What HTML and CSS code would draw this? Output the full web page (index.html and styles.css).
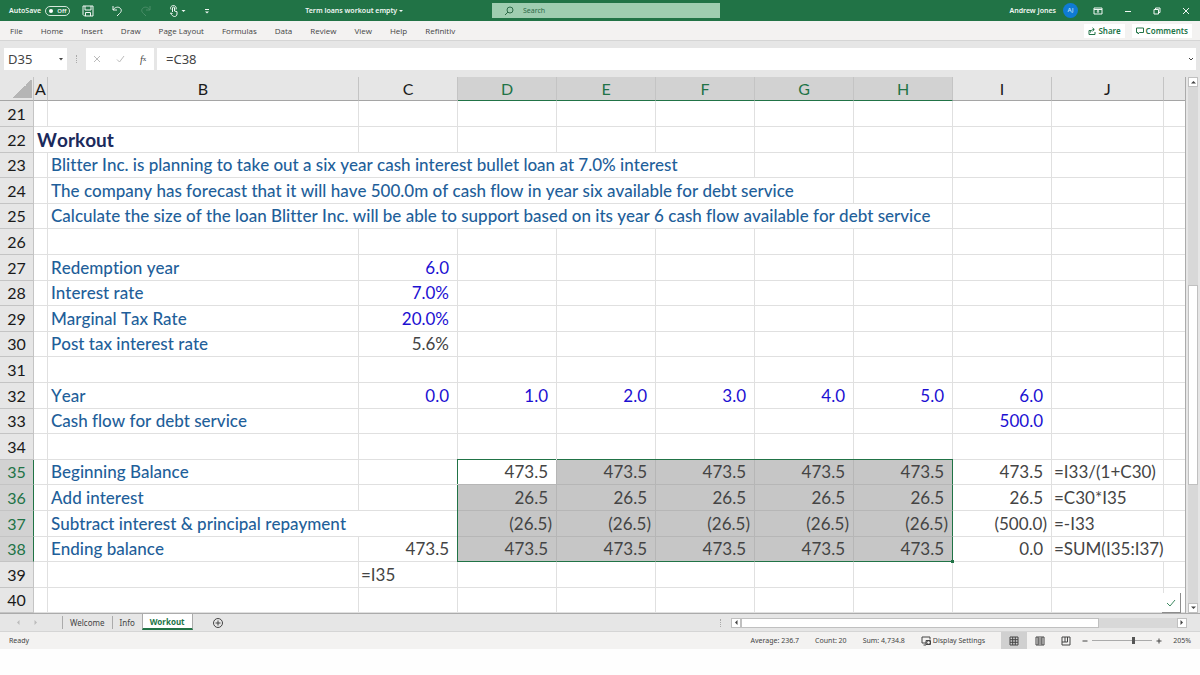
FILE: index.html
```
<!DOCTYPE html>
<html lang="en">
<head>
  <meta charset="UTF-8">
  <meta name="viewport" content="width=device-width, initial-scale=1.0">
  <title>Term loans workout empty</title>
  <link rel="stylesheet" href="styles.css">
</head>
<body>
  <header class="titlebar">
    <div class="title-left">
      <label class="autosave">AutoSave <input type="checkbox"><span class="switch">Off</span></label>
      <div class="quick">
        <button aria-label="Save"><svg width="12" height="12" viewBox="0 0 12 12"><path d="M1 1h10v10H2.500L1 9.500zM3 1v4h6V1M3.500 11V7.500h5V11"/></svg></button>
        <button aria-label="Undo"><svg width="12" height="12" viewBox="0 0 12 12"><path d="M2 1v4h4M2 5c2-3 5-3.500 7-2s1.500 4-.5 5.500L6 11"/></svg></button>
        <button class="faded" aria-label="Redo"><svg width="12" height="12" viewBox="0 0 12 12"><path d="M10 1v4H6M10 5C8 2 5 1.500 3 3s-1.500 4 .5 5.500L6 11"/></svg></button>
        <button class="touch" aria-label="Touch mode"><svg width="18" height="12" viewBox="0 0 18 12"><path d="M3.500 7V3a1 1 0 0 1 2 0v3l2.500.7V9c0 1.500-1 2.500-2.500 2.500S2.500 10 1.500 8l2 .5M2 4.500C.5 2 3 .5 4.500.5S8 2 7 4.500"/><path class="solid" d="M12.500 5h4l-2 2z"/></svg></button>
        <button aria-label="Customize toolbar"><svg width="6" height="12" viewBox="0 0 6 12"><path d="M1 4.500h4"/><path class="solid" d="M1 6.500h4L3 8.500z"/></svg></button>
      </div>
      <span class="doc-name">Term loans workout empty <svg width="4" height="4" viewBox="0 0 4 4"><path class="solid" d="M0 1h4L2 3z"/></svg></span>
    </div>
    <div class="search">
      <svg width="10" height="10" viewBox="0 0 10 10"><circle cx="6" cy="4" r="3"/><path d="M4 6L1 9"/></svg>
      <input type="text" placeholder="Search" aria-label="Search">
    </div>
    <div class="title-right">
      <span>Andrew Jones</span>
      <span class="avatar">AJ</span>
      <div class="window-btns">
        <button aria-label="Ribbon display options"><svg width="10" height="8" viewBox="0 0 10 8"><path d="M1 1h8v6H1zM1 2.500h8M5 6V3.500M3.800 4.500L5 3.500l1.200 1"/></svg></button>
        <button aria-label="Minimize"><svg width="8" height="8" viewBox="0 0 8 8"><path d="M1 4.500h6"/></svg></button>
        <button aria-label="Restore"><svg width="8" height="8" viewBox="0 0 8 8"><path d="M1 2.500h4.500V7H1zM2.500 2.500V1H7v4.500H5.500"/></svg></button>
        <button aria-label="Close"><svg width="8" height="8" viewBox="0 0 8 8"><path d="M1 1l6 6M7 1L1 7"/></svg></button>
      </div>
    </div>
  </header>

  <nav class="ribbon">
    <a href="#">File</a>
    <a href="#">Home</a>
    <a href="#">Insert</a>
    <a href="#">Draw</a>
    <a href="#">Page Layout</a>
    <a href="#">Formulas</a>
    <a href="#">Data</a>
    <a href="#">Review</a>
    <a href="#">View</a>
    <a href="#">Help</a>
    <a href="#">Refinitiv</a>
    <div class="ribbon-actions">
      <button><svg width="8" height="8" viewBox="0 0 8 8"><path d="M3 3.500H1v4h6V5M2.500 5.500C2.500 3.500 4 2.500 6 2.500M4.500.8l1.800 1.700-1.800 1.700"/></svg>Share</button>
      <button><svg width="8" height="8" viewBox="0 0 8 8"><path d="M.5 1h7v4.500h-4L2 7V5.500H.5z"/></svg>Comments</button>
    </div>
  </nav>

  <div class="formula-bar">
    <div class="name-box">
      <input type="text" value="D35" aria-label="Name box">
      <button aria-label="Names"><svg width="6" height="4" viewBox="0 0 6 4"><path class="solid" d="M1 1h4L3 3.500z"/></svg></button>
    </div>
    <span class="grip"></span>
    <div class="fx-btns">
      <button aria-label="Cancel"><svg width="8" height="8" viewBox="0 0 8 8"><path d="M1 1l6 6M7 1L1 7"/></svg></button>
      <button aria-label="Enter"><svg width="9" height="8" viewBox="0 0 9 8"><path d="M1 4.500L3.500 7 8 1"/></svg></button>
      <button class="fx" aria-label="Insert function"><i>f</i><sub>x</sub></button>
    </div>
    <div class="formula">
      <input type="text" value="=C38" aria-label="Formula">
      <button aria-label="Expand"><svg width="6" height="5" viewBox="0 0 6 5"><path d="M1 1l2 2 2-2"/></svg></button>
    </div>
  </div>

  <main class="workspace">
    <div class="sheet">
      <table>
        <colgroup>
          <col class="c-num"><col class="c-a"><col class="c-b"><col class="c-val"><col class="c-val"><col class="c-val"><col class="c-val"><col class="c-val"><col class="c-val"><col class="c-val"><col class="c-j"><col>
        </colgroup>
        <thead>
          <tr><th class="corner"></th><th>A</th><th>B</th><th>C</th><th class="on">D</th><th class="on">E</th><th class="on">F</th><th class="on">G</th><th class="on">H</th><th>I</th><th>J</th><th></th></tr>
        </thead>
        <tbody>
          <tr><th>21</th><td></td><td></td><td></td><td></td><td></td><td></td><td></td><td></td><td></td><td></td><td></td></tr>
          <tr><th>22</th><td class="heading" colspan="2">Workout</td><td></td><td></td><td></td><td></td><td></td><td></td><td></td><td></td><td></td></tr>
          <tr><th>23</th><td></td><td class="label" colspan="5">Blitter Inc. is planning to take out a six year cash interest bullet loan at 7.0% interest</td><td></td><td></td><td></td><td></td><td></td></tr>
          <tr><th>24</th><td></td><td class="label" colspan="6">The company has forecast that it will have 500.0m of cash flow in year six available for debt service</td><td></td><td></td><td></td><td></td></tr>
          <tr><th>25</th><td></td><td class="label" colspan="7">Calculate the size of the loan Blitter Inc. will be able to support based on its year 6 cash flow available for debt service</td><td></td><td></td><td></td></tr>
          <tr><th>26</th><td></td><td></td><td></td><td></td><td></td><td></td><td></td><td></td><td></td><td></td><td></td></tr>
          <tr><th>27</th><td></td><td class="label">Redemption year</td><td class="num input">6.0</td><td></td><td></td><td></td><td></td><td></td><td></td><td></td><td></td></tr>
          <tr><th>28</th><td></td><td class="label">Interest rate</td><td class="num input">7.0%</td><td></td><td></td><td></td><td></td><td></td><td></td><td></td><td></td></tr>
          <tr><th>29</th><td></td><td class="label">Marginal Tax Rate</td><td class="num input">20.0%</td><td></td><td></td><td></td><td></td><td></td><td></td><td></td><td></td></tr>
          <tr><th>30</th><td></td><td class="label">Post tax interest rate</td><td class="num">5.6%</td><td></td><td></td><td></td><td></td><td></td><td></td><td></td><td></td></tr>
          <tr><th>31</th><td></td><td></td><td></td><td></td><td></td><td></td><td></td><td></td><td></td><td></td><td></td></tr>
          <tr><th>32</th><td></td><td class="label">Year</td><td class="num input">0.0</td><td class="num input">1.0</td><td class="num input">2.0</td><td class="num input">3.0</td><td class="num input">4.0</td><td class="num input">5.0</td><td class="num input">6.0</td><td></td><td></td></tr>
          <tr><th>33</th><td></td><td class="label">Cash flow for debt service</td><td></td><td></td><td></td><td></td><td></td><td></td><td class="num input">500.0</td><td></td><td></td></tr>
          <tr><th>34</th><td></td><td></td><td></td><td></td><td></td><td></td><td></td><td></td><td></td><td></td><td></td></tr>
          <tr class="range range-top"><th>35</th><td></td><td class="label">Beginning Balance</td><td></td><td class="num sel first active">473.5</td><td class="num sel">473.5</td><td class="num sel">473.5</td><td class="num sel">473.5</td><td class="num sel last">473.5</td><td class="num">473.5</td><td>=I33/(1+C30)</td><td></td></tr>
          <tr class="range"><th>36</th><td></td><td class="label">Add interest</td><td></td><td class="num sel first">26.5</td><td class="num sel">26.5</td><td class="num sel">26.5</td><td class="num sel">26.5</td><td class="num sel last">26.5</td><td class="num">26.5</td><td>=C30*I35</td><td></td></tr>
          <tr class="range"><th>37</th><td></td><td class="label" colspan="2">Subtract interest &amp; principal repayment</td><td class="num neg sel first">(26.5)</td><td class="num neg sel">(26.5)</td><td class="num neg sel">(26.5)</td><td class="num neg sel">(26.5)</td><td class="num neg sel last">(26.5)</td><td class="num neg">(500.0)</td><td>=-I33</td><td></td></tr>
          <tr class="range range-bottom"><th>38</th><td></td><td class="label">Ending balance</td><td class="num">473.5</td><td class="num sel first">473.5</td><td class="num sel">473.5</td><td class="num sel">473.5</td><td class="num sel">473.5</td><td class="num sel last">473.5<span class="fill-handle"></span></td><td class="num">0.0</td><td colspan="2">=SUM(I35:I37)</td></tr>
          <tr><th>39</th><td></td><td></td><td>=I35</td><td></td><td></td><td></td><td></td><td></td><td></td><td></td><td></td></tr>
          <tr><th>40</th><td></td><td></td><td></td><td></td><td></td><td></td><td></td><td></td><td></td><td></td><td></td></tr>
        </tbody>
      </table>
      <div class="check-badge"><svg width="10" height="8" viewBox="0 0 10 8"><path d="M1 4l3 3 5-6"/></svg></div>
    </div>
    <div class="vscroll">
      <button aria-label="Scroll up"><svg width="5" height="4" viewBox="0 0 5 4"><path class="solid" d="M0 3.500h5L2.500 1z"/></svg></button>
      <div class="vtrack"><div class="vthumb"></div></div>
      <button aria-label="Scroll down"><svg width="5" height="4" viewBox="0 0 5 4"><path class="solid" d="M0 .5h5L2.500 3z"/></svg></button>
    </div>
  </main>

  <div class="sheet-tabs">
    <div class="tab-nav">
      <button aria-label="Previous sheet"><svg width="4" height="5" viewBox="0 0 4 5"><path class="solid" d="M3.500 0v5L1 2.500z"/></svg></button>
      <button aria-label="Next sheet"><svg width="4" height="5" viewBox="0 0 4 5"><path class="solid" d="M.5 0v5L3 2.500z"/></svg></button>
    </div>
    <button class="tab">Welcome</button>
    <button class="tab">Info</button>
    <button class="tab current">Workout</button>
    <button class="add-tab" aria-label="New sheet"><svg width="12" height="12" viewBox="0 0 12 12"><circle cx="6" cy="6" r="4.500"/><path d="M6 3.500v5M3.500 6h5"/></svg></button>
    <span class="grip"></span>
    <div class="hscroll">
      <button aria-label="Scroll left"><svg width="4" height="5" viewBox="0 0 4 5"><path class="solid" d="M3.500 0v5L1 2.500z"/></svg></button>
      <div class="htrack"><div class="hthumb"></div></div>
      <button aria-label="Scroll right"><svg width="4" height="5" viewBox="0 0 4 5"><path class="solid" d="M.5 0v5L3 2.500z"/></svg></button>
    </div>
  </div>

  <footer class="status">
    <span class="ready">Ready</span>
    <span>Average: 236.7</span>
    <span>Count: 20</span>
    <span>Sum: 4,734.8</span>
    <button class="display"><svg width="10" height="10" viewBox="0 0 10 10"><path d="M5 7H1V1h8v2.500M2.500 9H5"/><circle cx="7.500" cy="6.500" r="1.800"/><path d="M5 4.500h4.500v4H5z"/></svg>Display Settings</button>
    <div class="views">
      <button class="current" aria-label="Normal view"><svg width="10" height="10" viewBox="0 0 10 10"><path d="M1 1h8v8H1zM3.700 1v8M6.300 1v8M1 3.700h8M1 6.300h8"/></svg></button>
      <button aria-label="Page layout view"><svg width="10" height="10" viewBox="0 0 10 10"><path d="M1 1h8v8H1zM3 1v8M7 1v8M3 3h4M3 5h4M3 7h4"/></svg></button>
      <button aria-label="Page break view"><svg width="10" height="10" viewBox="0 0 10 10"><path d="M1 1h8v8H1zM1 6h5.500V1M4 1v5"/></svg></button>
    </div>
    <div class="zoom">
      <button aria-label="Zoom out"><svg width="6" height="6" viewBox="0 0 6 6"><path d="M.5 3h5"/></svg></button>
      <input type="range" min="0" max="100" value="70" aria-label="Zoom">
      <button aria-label="Zoom in"><svg width="6" height="6" viewBox="0 0 6 6"><path d="M.5 3h5M3 .5v5"/></svg></button>
      <span>205%</span>
    </div>
  </footer>
</body>
</html>
```

FILE: styles.css
```
* {
  box-sizing: border-box;
}
body {
  margin: 0;
  background: #fefefe;
  color: #444;
  font-family: "Noto Sans", "Open Sans", sans-serif;
  font-size: 8px;
}
button {
  display: flex;
  align-items: center;
  justify-content: center;
  padding: 0;
  border: none;
  background: none;
  color: inherit;
  font: inherit;
}
input {
  min-width: 0;
  margin: 0;
  padding: 0;
  border: none;
  background: none;
  color: inherit;
  font: inherit;
}
svg {
  flex: none;
  fill: none;
  stroke: currentColor;
}
svg .solid {
  fill: currentColor;
  stroke: none;
}

/* title bar */
.titlebar {
  display: grid;
  grid-template-columns: 41% 19% 1fr;
  align-items: center;
  height: 21px;
  background: #217346;
  color: #f2f8f4;
  font-size: 7px;
  font-weight: 600;
}
.title-left {
  display: flex;
  align-items: center;
  padding: 0 89px 0 9px;
}
.autosave {
  display: flex;
  align-items: center;
  gap: 4px;
}
.autosave input {
  position: absolute;
  opacity: 0;
}
.switch {
  display: flex;
  align-items: center;
  gap: 4px;
  height: 10px;
  padding: 0 3px;
  border: 1px solid #d5e8dc;
  border-radius: 5px;
  font-size: 6px;
}
.switch::before {
  content: "";
  width: 4px;
  height: 4px;
  border-radius: 50%;
  background: #fff;
}
.quick {
  display: flex;
  gap: 17px;
  margin-left: 12px;
}
.quick .faded {
  opacity: 0.2;
}
.doc-name {
  margin-left: auto;
}
.search {
  display: flex;
  align-items: center;
  gap: 9px;
  height: 15px;
  padding-left: 12px;
  background: #9fcdb0;
  color: #2d6a48;
  font-weight: 400;
}
.search input {
  flex: 1;
}
.search input::placeholder {
  color: #2d6a48;
  opacity: 1;
}
.title-right {
  display: flex;
  align-items: center;
  justify-content: flex-end;
  gap: 7px;
  padding-right: 10px;
}
.avatar {
  width: 15px;
  height: 15px;
  border-radius: 50%;
  background: #0f7bd4;
  color: #b5dcf8;
  font-size: 6px;
  line-height: 15px;
  text-align: center;
}
.window-btns {
  display: flex;
  gap: 21px;
  margin-left: 8px;
}

/* ribbon tabs */
.ribbon {
  display: flex;
  align-items: center;
  gap: 18px;
  height: 19px;
  padding: 0 8px 0 10px;
  background: #f3f2f1;
}
.ribbon a {
  color: #444;
  font-family: "Open Sans", sans-serif;
  text-decoration: none;
}
.ribbon-actions {
  display: flex;
  gap: 7px;
  margin-left: auto;
}
.ribbon-actions button {
  gap: 2px;
  height: 14px;
  padding: 0 4px;
  background: #fff;
  color: #217346;
  font-weight: 600;
}

/* formula bar */
.formula-bar {
  display: flex;
  align-items: center;
  height: 37px;
  padding: 0 4px;
  background: #e6e6e6;
  border-top: 1px solid #d5d5d5;
  font-size: 13px;
}
.name-box,
.fx-btns,
.formula {
  display: flex;
  align-items: center;
  height: 22px;
  background: #fff;
}
.name-box {
  width: 63px;
  padding: 0 3px 0 4px;
}
.name-box input {
  flex: 1;
}
.grip {
  width: 1px;
  height: 8px;
  border-left: 1px dotted #aaa;
}
.formula-bar .grip {
  margin: 0 9px;
}
.fx-btns {
  gap: 15px;
  width: 68px;
  padding-left: 7px;
  color: #bbb;
}
.fx {
  color: #444;
  font-family: "Liberation Serif", serif;
  font-size: 10px;
}
.fx sub {
  font-size: 7px;
}
.formula {
  flex: 1;
  margin-left: 3px;
  padding: 0 2px 0 9px;
}
.formula input {
  flex: 1;
}

/* grid */
.workspace {
  display: grid;
  grid-template-columns: 1fr 14px;
  background: #e6e6e6;
}
.sheet {
  position: relative;
  overflow: hidden;
  border-right: 1px solid #ababab;
}
table {
  width: 100%;
  table-layout: fixed;
  border-collapse: separate;
  border-spacing: 0;
  background: #fff;
  font-family: Lato, "Open Sans", sans-serif;
  font-size: 17px;
  font-kerning: none;
  font-variant-ligatures: none;
  line-height: 24px;
}
.c-num {
  width: 34px;
}
.c-a {
  width: 14px;
}
.c-b {
  width: 311px;
}
.c-val {
  width: 99px;
}
.c-j {
  width: 112px;
}
th,
td {
  height: 26px;
  padding: 0 2px;
  border-right: 1px solid #e0e0e0;
  border-bottom: 1px solid #e0e0e0;
  text-align: left;
  white-space: nowrap;
}
tbody tr:nth-child(5n + 3) > *,
tbody tr:nth-child(5n + 5) > * {
  height: 25px;
}
th {
  padding: 0;
  background: #e6e6e6;
  border-color: #c4c4c4;
  color: #1a1a1a;
  font-size: 16px;
  font-weight: 400;
  text-align: center;
}
thead th {
  height: 24px;
  line-height: 23px;
  border-bottom-color: #a5a5a5;
}
td:last-child,
th:last-child {
  border-right: none;
}
thead .on {
  background: #d2d2d2;
  border-bottom-color: #217346;
  color: #217346;
}
.corner {
  background: linear-gradient(135deg, #e6e6e6 50%, #b5b5b5 50%) 12px 3px / 20px 18px no-repeat #e6e6e6;
}
.heading {
  padding-left: 3px;
  color: #1b2a5c;
  font-size: 19px;
  font-weight: 700;
}
.label {
  padding-left: 3px;
  color: #1f5f9a;
  font-weight: 500;
}
.num {
  padding-right: 8px;
  text-align: right;
}
.neg {
  padding-right: 4px;
}
.input {
  color: #1c10d2;
}
.range th {
  background: #d2d2d2;
  border-right-color: #217346;
  color: #217346;
}
.sel {
  background: #c6c6c6;
  border-color: #b6b6b6;
}
.active {
  background: #fff;
}
.sel.first {
  box-shadow: -1px 0 0 #217346;
}
.sel.last {
  position: relative;
  border-right-color: #217346;
}
.range-top .sel {
  box-shadow: 0 -1px 0 #217346;
}
.range-top .sel.first {
  box-shadow: -1px -1px 0 #217346;
}
.range-bottom .sel {
  border-bottom-color: #217346;
}
.fill-handle {
  position: absolute;
  right: -2px;
  bottom: -2px;
  width: 3px;
  height: 3px;
  background: #217346;
}
.check-badge {
  position: absolute;
  right: 4px;
  bottom: 0;
  display: flex;
  align-items: center;
  justify-content: center;
  width: 19px;
  height: 20px;
  background: #fff;
  border-right: 1px solid #8c8c8c;
  border-bottom: 1px solid #8c8c8c;
  color: #3f8a62;
}

/* scrollbars */
.vscroll {
  display: flex;
  flex-direction: column;
  align-items: center;
}
.vscroll button,
.hscroll button {
  width: 10px;
  height: 10px;
  background: #fff;
  border: 1px solid #c0c0c0;
}
.vtrack {
  flex: 1;
  width: 10px;
  padding-top: 198px;
  background: #d8d8d8;
}
.vthumb {
  height: 200px;
  background: #fff;
  border: 1px solid #c0c0c0;
}
.hscroll {
  display: flex;
  flex: none;
  width: 38vw;
}
.htrack {
  flex: 1;
  background: #d8d8d8;
}
.hthumb {
  width: 82%;
  height: 10px;
  background: #fff;
  border: 1px solid #c0c0c0;
}

/* sheet tabs */
.sheet-tabs {
  display: flex;
  align-items: center;
  height: 18px;
  padding-right: 13px;
  background: #e6e6e6;
  border-top: 1px solid #ababab;
}
.tab-nav {
  display: flex;
  gap: 14px;
  width: 62px;
  padding-left: 16px;
  color: #bbb;
}
.tab {
  height: 13px;
  padding: 0 7px;
  border-left: 1px solid #ababab;
}
.tab.current {
  align-self: flex-start;
  height: 16px;
  background: #fff;
  border-right: 1px solid #ababab;
  border-bottom: 2px solid #217346;
  color: #217346;
  font-weight: 700;
}
.add-tab {
  margin-left: 19px;
}
.sheet-tabs .grip {
  margin-left: auto;
  margin-right: 10px;
}

/* status bar */
.status {
  display: flex;
  align-items: center;
  gap: 16px;
  height: 18px;
  padding: 0 9px;
  background: #f3f2f1;
  border-top: 1px solid #d5d5d5;
  font-size: 7px;
}
.ready {
  margin-right: auto;
}
.display {
  gap: 2px;
}
.views {
  display: flex;
}
.views button {
  width: 26px;
  height: 17px;
}
.views .current {
  background: #d0d0d0;
}
.zoom {
  display: flex;
  align-items: center;
  gap: 4px;
  margin-left: -13px;
}
.zoom span {
  margin-left: 7px;
}
.zoom input {
  width: 60px;
  height: 8px;
  appearance: none;
  background: linear-gradient(#aaa, #aaa) center / 100% 1px no-repeat;
}
.zoom input::-webkit-slider-thumb {
  appearance: none;
  width: 3px;
  height: 7px;
  background: #555;
}
```
